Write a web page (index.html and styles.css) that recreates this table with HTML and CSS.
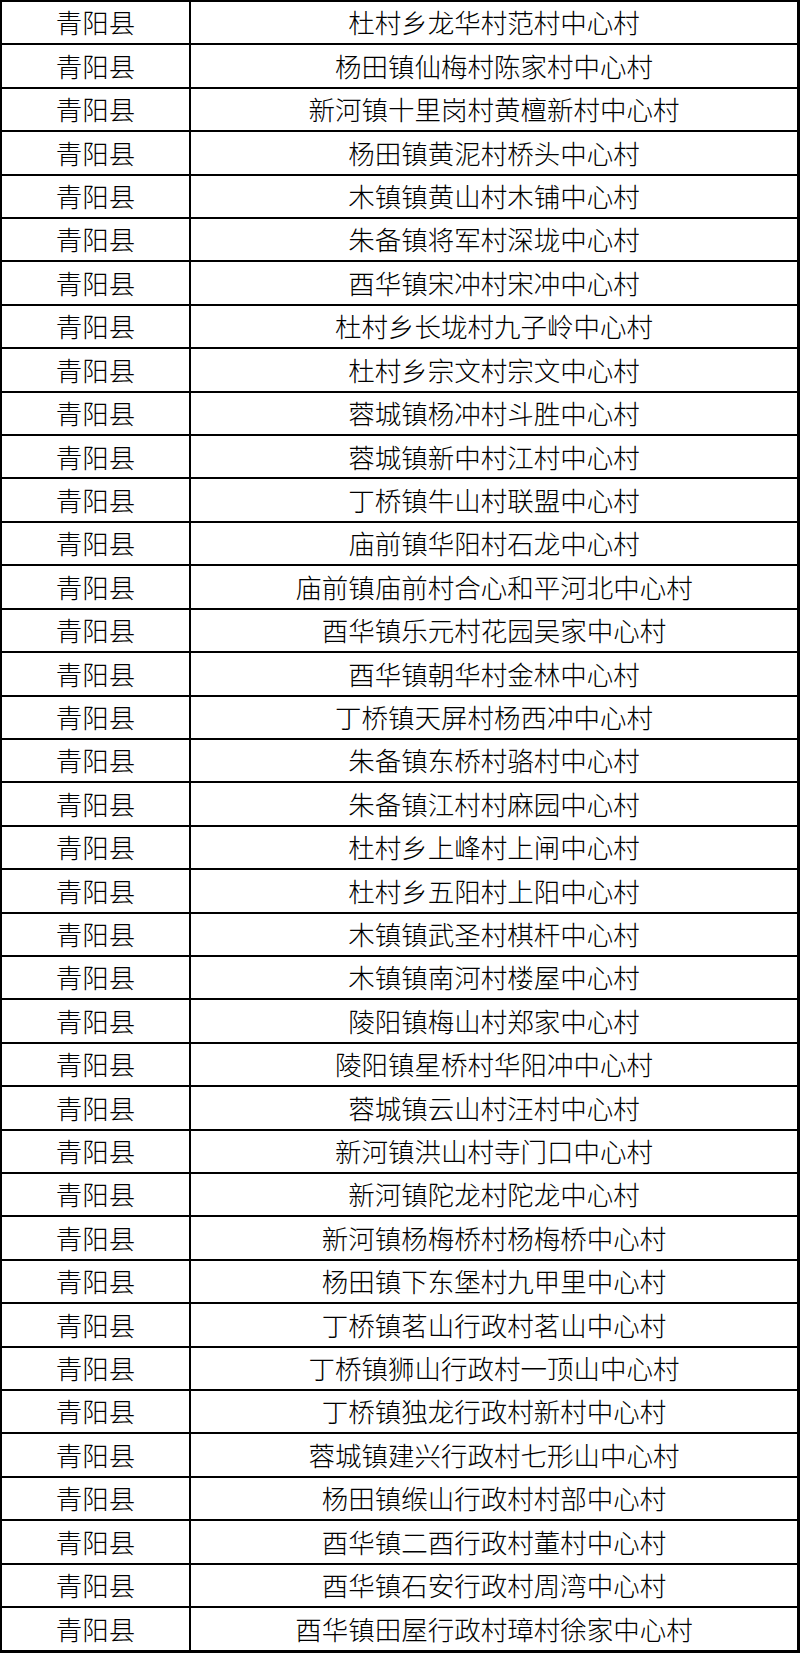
FILE: index.html
```html
<!DOCTYPE html>
<html lang="zh-CN">
<head>
<meta charset="utf-8">
<title>中心村名单</title>
<link rel="stylesheet" href="styles.css">
</head>
<body>
<table class="list">
<colgroup><col class="col-county"><col class="col-village"></colgroup>
<tbody>
<tr><td>青阳县</td><td>杜村乡龙华村范村中心村</td></tr>
<tr><td>青阳县</td><td>杨田镇仙梅村陈家村中心村</td></tr>
<tr><td>青阳县</td><td>新河镇十里岗村黄檀新村中心村</td></tr>
<tr><td>青阳县</td><td>杨田镇黄泥村桥头中心村</td></tr>
<tr><td>青阳县</td><td>木镇镇黄山村木铺中心村</td></tr>
<tr><td>青阳县</td><td>朱备镇将军村深垅中心村</td></tr>
<tr><td>青阳县</td><td>酉华镇宋冲村宋冲中心村</td></tr>
<tr><td>青阳县</td><td>杜村乡长垅村九子岭中心村</td></tr>
<tr><td>青阳县</td><td>杜村乡宗文村宗文中心村</td></tr>
<tr><td>青阳县</td><td>蓉城镇杨冲村斗胜中心村</td></tr>
<tr><td>青阳县</td><td>蓉城镇新中村江村中心村</td></tr>
<tr><td>青阳县</td><td>丁桥镇牛山村联盟中心村</td></tr>
<tr><td>青阳县</td><td>庙前镇华阳村石龙中心村</td></tr>
<tr><td>青阳县</td><td>庙前镇庙前村合心和平河北中心村</td></tr>
<tr><td>青阳县</td><td>酉华镇乐元村花园吴家中心村</td></tr>
<tr><td>青阳县</td><td>酉华镇朝华村金林中心村</td></tr>
<tr><td>青阳县</td><td>丁桥镇天屏村杨西冲中心村</td></tr>
<tr><td>青阳县</td><td>朱备镇东桥村骆村中心村</td></tr>
<tr><td>青阳县</td><td>朱备镇江村村麻园中心村</td></tr>
<tr><td>青阳县</td><td>杜村乡上峰村上闸中心村</td></tr>
<tr><td>青阳县</td><td>杜村乡五阳村上阳中心村</td></tr>
<tr><td>青阳县</td><td>木镇镇武圣村棋杆中心村</td></tr>
<tr><td>青阳县</td><td>木镇镇南河村楼屋中心村</td></tr>
<tr><td>青阳县</td><td>陵阳镇梅山村郑家中心村</td></tr>
<tr><td>青阳县</td><td>陵阳镇星桥村华阳冲中心村</td></tr>
<tr><td>青阳县</td><td>蓉城镇云山村汪村中心村</td></tr>
<tr><td>青阳县</td><td>新河镇洪山村寺门口中心村</td></tr>
<tr><td>青阳县</td><td>新河镇陀龙村陀龙中心村</td></tr>
<tr><td>青阳县</td><td>新河镇杨梅桥村杨梅桥中心村</td></tr>
<tr><td>青阳县</td><td>杨田镇下东堡村九甲里中心村</td></tr>
<tr><td>青阳县</td><td>丁桥镇茗山行政村茗山中心村</td></tr>
<tr><td>青阳县</td><td>丁桥镇狮山行政村一顶山中心村</td></tr>
<tr><td>青阳县</td><td>丁桥镇独龙行政村新村中心村</td></tr>
<tr><td>青阳县</td><td>蓉城镇建兴行政村七形山中心村</td></tr>
<tr><td>青阳县</td><td>杨田镇缑山行政村村部中心村</td></tr>
<tr><td>青阳县</td><td>酉华镇二酉行政村董村中心村</td></tr>
<tr><td>青阳县</td><td>酉华镇石安行政村周湾中心村</td></tr>
<tr><td>青阳县</td><td>酉华镇田屋行政村璋村徐家中心村</td></tr>
</tbody>
</table>
</body>
</html>
```
FILE: styles.css
```css
html, body {
  margin: 0;
  padding: 0;
  background: #ffffff;
}

.list {
  width: 800px;
  height: 1653px;
  table-layout: fixed;
  border-collapse: separate;
  border-spacing: 0;
  border-top: 2px solid #000;
  border-left: 2px solid #000;
  font-family: "Noto Sans CJK SC", "Noto Sans", sans-serif;
  font-weight: 300;
  font-size: 26.5px;
  line-height: 1;
  color: #000;
}

.col-county {
  width: 189px;
}

.list td {
  padding: 0;
  text-align: center;
  vertical-align: middle;
  border-right: 2px solid #000;
  border-bottom: 2px solid #000;
  white-space: nowrap;
}

.list td:last-child {
  border-right-width: 3px;
}

.list tr:last-child td {
  border-bottom-width: 3px;
}
```
